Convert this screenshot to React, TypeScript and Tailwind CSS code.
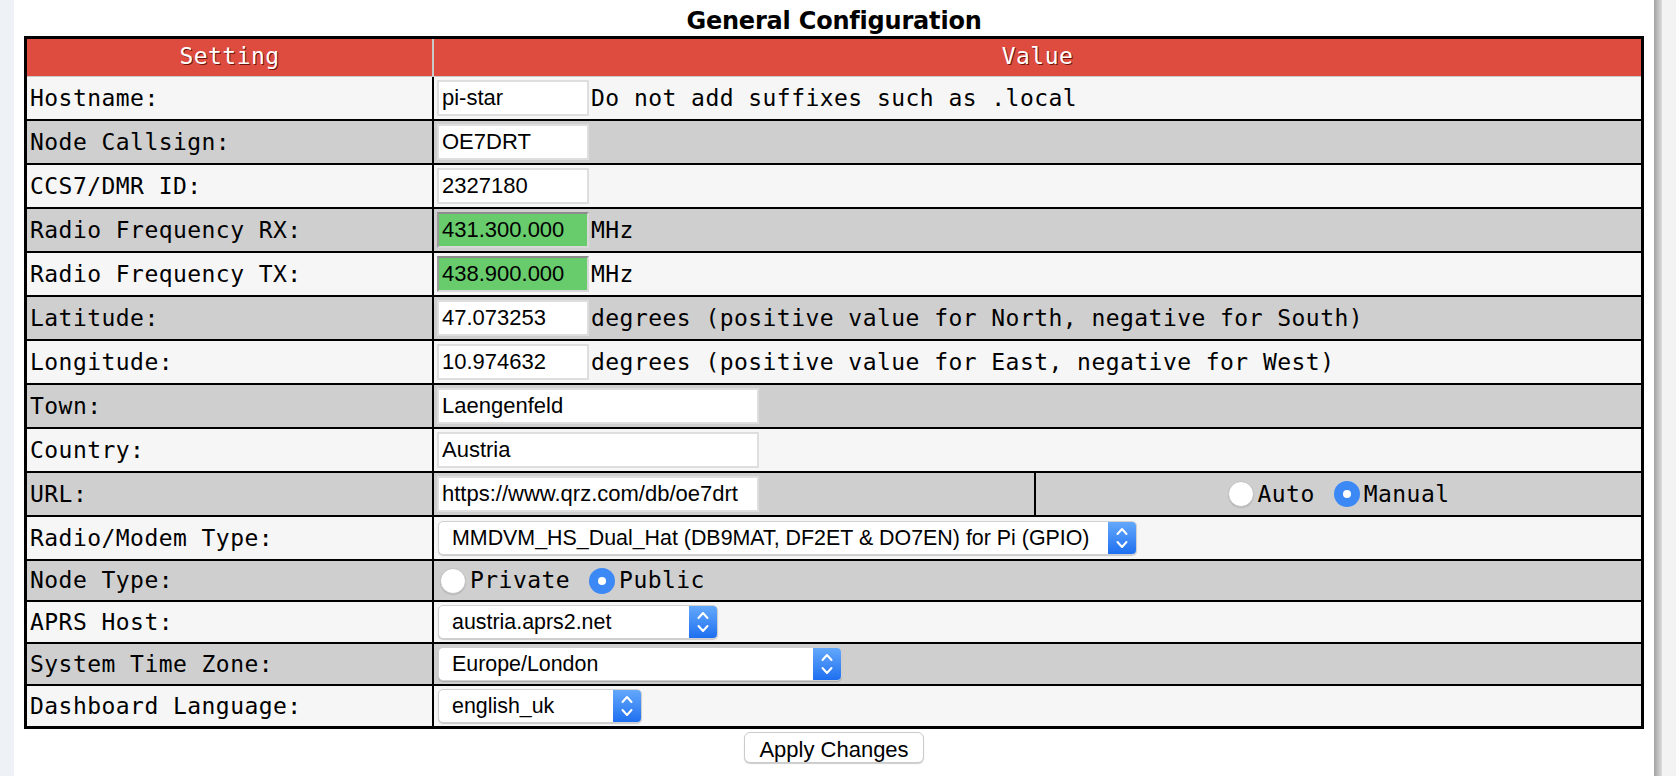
import type { ReactNode } from "react";

const mono = "font-['DejaVu_Sans_Mono',monospace] text-[23px] tracking-[0.45px] text-black";
const sans = "font-['Liberation_Sans',Arial,sans-serif] text-[22px] text-black";

function Row({
  label,
  dark,
  h,
  last,
  children,
}: {
  label: string;
  dark?: boolean;
  h: string;
  last?: boolean;
  children?: ReactNode;
}) {
  return (
    <div
      className={`flex ${h} ${dark ? "bg-[#cfcfcf]" : "bg-[#f6f6f6]"} ${last ? "" : "border-b-2 border-black"}`}
    >
      <div className={`w-[407px] shrink-0 flex items-center pl-[3px] border-r-2 border-black ${mono}`}>
        {label}
      </div>
      <div className="flex-1 flex items-center pl-[3px]">{children}</div>
    </div>
  );
}

function TextInput({ value, wide, green }: { value: string; wide?: boolean; green?: boolean }) {
  return (
    <input
      readOnly
      value={value}
      className={`h-[36px] px-[3px] outline-none ${sans} ${wide ? "w-[322px]" : "w-[152px]"} ${
        green
          ? "bg-[#68cb6c] border-2 border-t-[#8c8c8c] border-l-[#9a9a9a] border-b-[#d8d8d8] border-r-[#d8d8d8]"
          : "bg-white border-2 border-[#dedede]"
      }`}
    />
  );
}

function Note({ children }: { children: ReactNode }) {
  return <span className={`ml-[2px] whitespace-nowrap ${mono}`}>{children}</span>;
}

function Select({ value, w }: { value: string; w: string }) {
  return (
    <div
      className={`ml-[1px] flex h-[34px] ${w} rounded-[5px] bg-white border border-[#d0d0d0] shadow-[0_1px_1px_rgba(0,0,0,0.18)] overflow-hidden`}
    >
      <div className="flex-1 flex items-center pl-[13px] whitespace-nowrap font-['Liberation_Sans',Arial,sans-serif] text-[21.4px] text-black">
        {value}
      </div>
      <div className="w-[28px] shrink-0 flex items-center justify-center bg-linear-to-b from-[#63a8fb] to-[#1e6ff0]">
        <svg width="14" height="28" viewBox="0 0 14 28" fill="none">
          <path d="M2.5 10 L7 5 L11.5 10" stroke="white" strokeWidth="2" strokeLinecap="round" strokeLinejoin="round" />
          <path d="M2.5 18 L7 23 L11.5 18" stroke="white" strokeWidth="2" strokeLinecap="round" strokeLinejoin="round" />
        </svg>
      </div>
    </div>
  );
}

function Radio({ checked }: { checked?: boolean }) {
  return checked ? (
    <span className="w-[26px] h-[26px] shrink-0 rounded-full bg-[#3c89f6] flex items-center justify-center">
      <span className="w-[8px] h-[8px] rounded-full bg-white" />
    </span>
  ) : (
    <span className="w-[26px] h-[26px] shrink-0 rounded-full bg-white border border-[#c2c2c2] shadow-[0_1px_1px_rgba(0,0,0,0.12)]" />
  );
}

function RadioOption({ label, checked, first }: { label: string; checked?: boolean; first?: boolean }) {
  return (
    <div className={`flex items-center ${first ? "" : "ml-[19px]"}`}>
      <Radio checked={checked} />
      <span className={`ml-[4px] ${mono}`}>{label}</span>
    </div>
  );
}

export default function App() {
  return (
    <div className="flex w-[1676px] h-[776px] bg-white overflow-hidden">
      <div className="w-[14px] shrink-0 bg-[#eef1f5]" />
      <div className="w-[1640px] shrink-0 bg-white flex flex-col">
        <div className="h-[36px] pt-[7px] text-center font-['DejaVu_Sans',Verdana,sans-serif] font-bold text-[24px] leading-[28px] tracking-[-0.2px] text-black">
          General Configuration
        </div>
        <div className="mx-[10px] border-[3px] border-black">
          <div className="flex h-[38px] bg-[#dd4c3f] border-b border-[#c9c9c9] text-white [text-shadow:1px_1px_0_#6e120a]">
            <div className="w-[407px] shrink-0 flex items-center justify-center pb-[3px] border-r-2 border-[#c9c9c9] font-['DejaVu_Sans_Mono',monospace] text-[23px] tracking-[0.45px]">
              Setting
            </div>
            <div className="flex-1 flex items-center justify-center pb-[3px] font-['DejaVu_Sans_Mono',monospace] text-[23px] tracking-[0.45px]">
              Value
            </div>
          </div>

          <Row label="Hostname:" h="h-[44px]">
            <TextInput value="pi-star" />
            <Note>Do not add suffixes such as .local</Note>
          </Row>
          <Row label="Node Callsign:" h="h-[44px]" dark>
            <TextInput value="OE7DRT" />
          </Row>
          <Row label="CCS7/DMR ID:" h="h-[44px]">
            <TextInput value="2327180" />
          </Row>
          <Row label="Radio Frequency RX:" h="h-[44px]" dark>
            <TextInput value="431.300.000" green />
            <Note>MHz</Note>
          </Row>
          <Row label="Radio Frequency TX:" h="h-[44px]">
            <TextInput value="438.900.000" green />
            <Note>MHz</Note>
          </Row>
          <Row label="Latitude:" h="h-[44px]" dark>
            <TextInput value="47.073253" />
            <Note>degrees (positive value for North, negative for South)</Note>
          </Row>
          <Row label="Longitude:" h="h-[44px]">
            <TextInput value="10.974632" />
            <Note>degrees (positive value for East, negative for West)</Note>
          </Row>
          <Row label="Town:" h="h-[44px]" dark>
            <TextInput value="Laengenfeld" wide />
          </Row>
          <Row label="Country:" h="h-[44px]">
            <TextInput value="Austria" wide />
          </Row>
          <div className="flex h-[44px] bg-[#cfcfcf] border-b-2 border-black">
            <div className={`w-[407px] shrink-0 flex items-center pl-[3px] border-r-2 border-black ${mono}`}>
              URL:
            </div>
            <div className="w-[602px] shrink-0 flex items-center pl-[3px] border-r-2 border-black">
              <TextInput value="https://www.qrz.com/db/oe7drt" wide />
            </div>
            <div className="flex-1 flex items-center justify-center">
              <RadioOption label="Auto" first />
              <RadioOption label="Manual" checked />
            </div>
          </div>
          <Row label="Radio/Modem Type:" h="h-[44px]">
            <Select value="MMDVM_HS_Dual_Hat (DB9MAT, DF2ET & DO7EN) for Pi (GPIO)" w="w-[699px]" />
          </Row>
          <Row label="Node Type:" h="h-[41px]" dark>
            <div className="ml-[3px] flex items-center">
              <RadioOption label="Private" first />
              <RadioOption label="Public" checked />
            </div>
          </Row>
          <Row label="APRS Host:" h="h-[42px]">
            <Select value="austria.aprs2.net" w="w-[280px]" />
          </Row>
          <Row label="System Time Zone:" h="h-[42px]" dark>
            <Select value="Europe/London" w="w-[404px]" />
          </Row>
          <Row label="Dashboard Language:" h="h-[40px]" last>
            <Select value="english_uk" w="w-[204px]" />
          </Row>
        </div>
        <div className="mt-[3px] flex justify-center">
          <button
            type="button"
            className={`h-[31px] w-[180px] rounded-[6px] bg-white border border-[#cbcbcb] shadow-[0_1px_1px_rgba(0,0,0,0.2)] ${sans} text-[#222]`}
          >
            Apply Changes
          </button>
        </div>
      </div>
      <div className="w-[8px] shrink-0 bg-linear-to-r from-[#a3a3a3] to-[#dcdcdc]" />
      <div className="flex-1 bg-[#f3f3f3]" />
    </div>
  );
}
